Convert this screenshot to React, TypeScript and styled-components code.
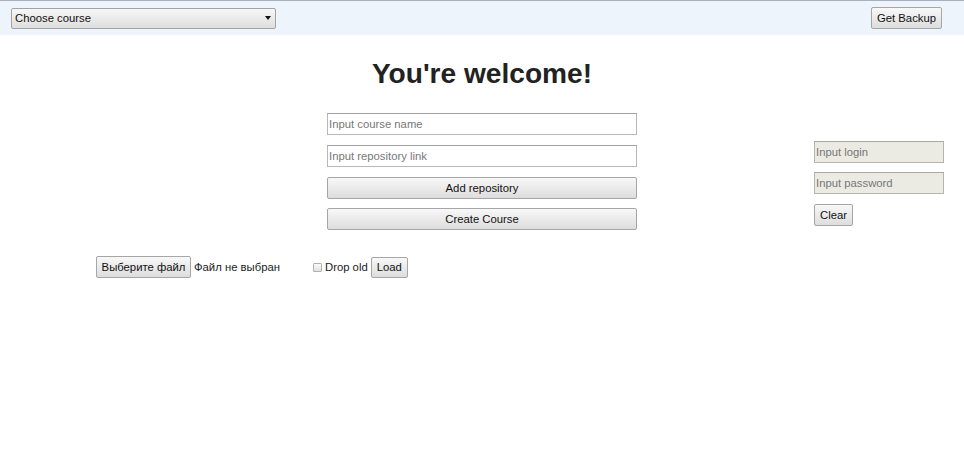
import React from "react";
import styled, { createGlobalStyle } from "styled-components";

const Global = createGlobalStyle`
  html, body { margin: 0; padding: 0; background: #fff; }
  body { font-family: "Liberation Sans", Arial, sans-serif; color: #222; }
  * { box-sizing: border-box; }
`;

const Header = styled.header`
  height: 35px;
  border-top: 1px solid #a9b0bd;
  background: #eef4fc;
  display: flex;
  align-items: center;
  justify-content: space-between;
  padding: 0 22px 0 11px;
`;

const SelectBox = styled.div`
  position: relative;
  width: 265px;
  height: 21px;
  border: 1px solid #a3a3a3;
  border-radius: 2px;
  background: linear-gradient(#f7f7f7, #dedede);
  font-size: 11.3px;
  color: #111;
  display: flex;
  align-items: center;
  padding-left: 3px;
`;

const Arrow = styled.span`
  position: absolute;
  right: 4px;
  top: 7px;
  width: 0;
  height: 0;
  border-left: 3px solid transparent;
  border-right: 3px solid transparent;
  border-top: 4px solid #111;
`;

const Button = styled.button<{ $w?: number; $h?: number; $full?: boolean }>`
  font-family: "Liberation Sans", Arial, sans-serif;
  font-size: 11.3px;
  color: #111;
  height: ${(p) => p.$h ?? 22}px;
  width: ${(p) => (p.$full ? "100%" : p.$w ? `${p.$w}px` : "auto")};
  padding: 0 5px;
  border: 1px solid #a6a6a6;
  border-radius: 2px;
  background: linear-gradient(#f8f8f8, #dddddd);
  margin: 0;
  display: inline-flex;
  align-items: center;
  justify-content: center;
  white-space: nowrap;
`;

const Title = styled.h1`
  margin: 23px 0 0;
  text-align: center;
  font-size: 28.1px;
  line-height: 32px;
  font-weight: bold;
  color: #222;
`;

const FormGrid = styled.div`
  display: grid;
  grid-template-columns: 1fr 310px 1fr;
  margin-top: 23px;
`;

const Column = styled.div<{ $gap: number }>`
  display: flex;
  flex-direction: column;
  gap: ${(p) => p.$gap}px;
`;

const TextInput = styled.input<{ $disabled?: boolean }>`
  width: 100%;
  height: 22px;
  margin: 0;
  padding: 0 1px;
  font-family: "Liberation Sans", Arial, sans-serif;
  font-size: 11.3px;
  border: 1px solid ${(p) => (p.$disabled ? "#b5b5ad" : "#b8b8b8")};
  border-top-color: ${(p) => (p.$disabled ? "#a9a9a2" : "#a0a0a0")};
  background: ${(p) => (p.$disabled ? "#ebebe4" : "#fff")};
  outline: none;
  &::placeholder { color: #777; }
`;

const SidePanel = styled(Column)`
  justify-self: end;
  width: 130px;
  margin: 28px 20px 0 0;
  align-items: flex-start;
`;

const CenterCol = styled(Column)`
  grid-column: 2;
`;

const LastButton = styled(Button)`
  margin-top: -1px;
`;

const ClearButton = styled(Button)`
  margin-top: 1px;
`;

const LoadRow = styled.div`
  display: flex;
  align-items: center;
  margin-top: 26px;
  padding-left: 96px;
  font-size: 11.3px;
  color: #222;
`;

const FileName = styled.span`
  margin-left: 3px;
  width: 119px;
`;

const CheckLabel = styled.label`
  display: inline-flex;
  align-items: center;
  gap: 3px;
  margin-right: 3px;
`;

const Check = styled.input`
  appearance: none;
  width: 9px;
  height: 9px;
  margin: 0;
  border: 1px solid #b0b0b0;
  border-radius: 1px;
  background: linear-gradient(#fafafa, #e2e2e2);
`;

export default function App() {
  return (
    <>
      <Global />
      <Header>
        <SelectBox>
          Choose course
          <Arrow />
        </SelectBox>
        <Button $w={71}>Get Backup</Button>
      </Header>
      <Title>You're welcome!</Title>
      <FormGrid>
        <CenterCol $gap={10}>
          <TextInput placeholder="Input course name" />
          <TextInput placeholder="Input repository link" />
          <Button $full>Add repository</Button>
          <LastButton $full>Create Course</LastButton>
        </CenterCol>
        <SidePanel $gap={9}>
          <TextInput $disabled placeholder="Input login" />
          <TextInput $disabled placeholder="Input password" />
          <ClearButton $w={39}>Clear</ClearButton>
        </SidePanel>
      </FormGrid>
      <LoadRow>
        <Button $w={95}>Выберите файл</Button>
        <FileName>Файл не выбран</FileName>
        <CheckLabel>
          <Check type="checkbox" />
          Drop old
        </CheckLabel>
        <Button $w={37} $h={21}>Load</Button>
      </LoadRow>
    </>
  );
}
